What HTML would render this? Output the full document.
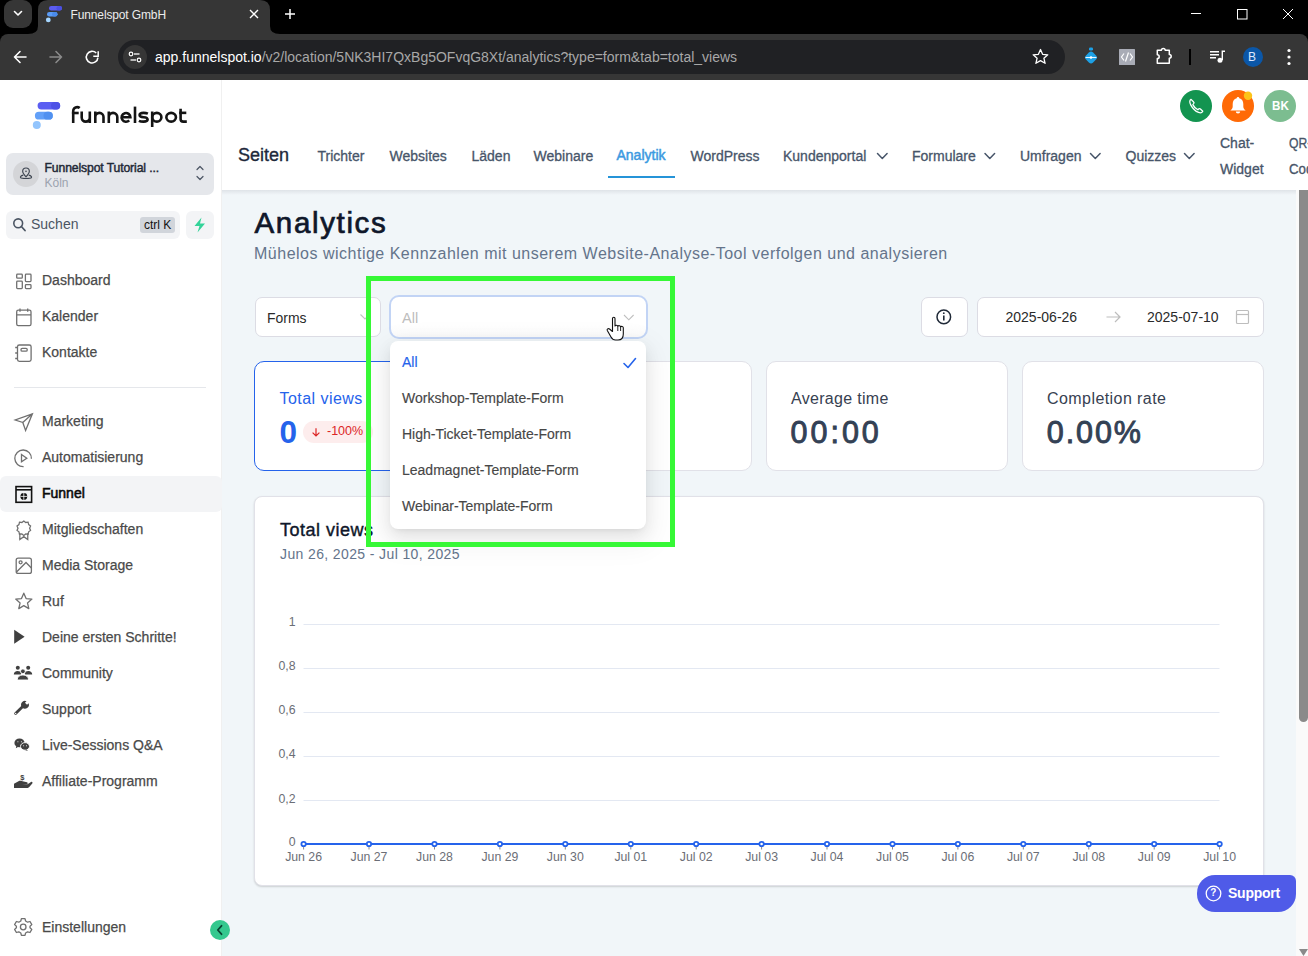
<!DOCTYPE html>
<html><head><meta charset="utf-8">
<style>
*{box-sizing:border-box}
html,body{margin:0;padding:0}
body{width:1308px;height:956px;overflow:hidden;position:relative;font-family:"Liberation Sans",sans-serif;background:#fff}
.a{position:absolute}
.t{position:absolute;white-space:nowrap;line-height:1}
svg{position:absolute;overflow:visible}
</style></head><body>

<!-- ============ BROWSER CHROME ============ -->
<div class="a" style="left:0;top:0;width:1308px;height:44px;background:#000"></div>
<!-- tab search -->
<div class="a" style="left:4px;top:0;width:28px;height:28px;background:#363636;border-radius:9px"></div>
<svg style="left:0;top:0" width="40" height="34"><path d="M14.5 11.5 L18 15 L21.5 11.5" fill="none" stroke="#fff" stroke-width="1.6" stroke-linecap="round" stroke-linejoin="round"/></svg>
<!-- active tab -->
<svg style="left:0;top:0" width="300" height="34">
  <path d="M28 34 Q38 34 38 26 L38 10 Q38 0 48 0 L260 0 Q270 0 270 10 L270 26 Q270 34 280 34 Z" fill="#363636"/>
</svg>
<svg style="left:0;top:0" width="80" height="34">
  <rect x="49" y="6" width="13" height="4.5" rx="2.25" fill="#5b5cf0"/>
  <rect x="56.5" y="6" width="5.5" height="4.5" rx="2.25" fill="#4b50e2"/>
  <rect x="47" y="12" width="10.5" height="4.5" rx="2.25" fill="#5a9bf5"/>
  <rect x="52" y="12" width="5.5" height="4.5" rx="2.25" fill="#4a8aea"/>
  <circle cx="48.3" cy="19.9" r="2.4" fill="#a5d6ff"/>
</svg>
<div class="t" style="left:70.5px;top:9px;font-size:12px;color:#ececec;letter-spacing:-0.13px">Funnelspot GmbH</div>
<svg style="left:0;top:0" width="300" height="34"><path d="M250 10 L258 18 M258 10 L250 18" stroke="#fff" stroke-width="1.4"/></svg>
<svg style="left:0;top:0" width="320" height="34"><path d="M290 9 V19 M285 14 H295" stroke="#fff" stroke-width="1.5"/></svg>
<!-- window controls -->
<svg style="left:0;top:0" width="1308" height="34">
  <path d="M1191 13.5 H1201" stroke="#fff" stroke-width="1"/>
  <rect x="1237.5" y="9.5" width="9.5" height="9.5" fill="none" stroke="#fff" stroke-width="1"/>
  <path d="M1283 9 L1293 19 M1293 9 L1283 19" stroke="#fff" stroke-width="1"/>
</svg>

<!-- toolbar -->
<div class="a" style="left:0;top:34px;width:1308px;height:46px;background:#363636;border-radius:8px 8px 0 0"></div>
<svg style="left:0;top:34px" width="120" height="46">
  <path d="M14.5 23 H26 M14.5 23 L20 17.5 M14.5 23 L20 28.5" fill="none" stroke="#fff" stroke-width="1.6" stroke-linecap="round"/>
  <path d="M61.5 23 H50 M61.5 23 L56 17.5 M61.5 23 L56 28.5" fill="none" stroke="#8a8a8a" stroke-width="1.6" stroke-linecap="round"/>
  <path d="M97.9 23.6 A5.8 5.8 0 1 1 96.2 19" fill="none" stroke="#fff" stroke-width="1.6"/>
  <path d="M93.3 22.2 H98.2 V17.3" fill="none" stroke="#fff" stroke-width="1.5"/>
</svg>
<div class="a" style="left:118px;top:40px;width:947px;height:34px;background:#202124;border-radius:17px"></div>
<div class="a" style="left:123px;top:45px;width:24px;height:24px;background:#363636;border-radius:12px"></div>
<svg style="left:0;top:34px" width="160" height="46">
  <circle cx="131" cy="20" r="1.8" fill="none" stroke="#fff" stroke-width="1.2"/>
  <path d="M134 20 H139.5" stroke="#fff" stroke-width="1.3"/>
  <circle cx="139" cy="26" r="1.8" fill="none" stroke="#fff" stroke-width="1.2"/>
  <path d="M130.5 26 H136" stroke="#fff" stroke-width="1.3"/>
</svg>
<div class="t" style="left:155px;top:50px;font-size:14px;color:#fff">app.funnelspot.io<span style="color:#a8a8a8">/v2/location/5NK3HI7QxBg5OFvqG8Xt/analytics?type=form&amp;tab=total_views</span></div>
<svg style="left:0;top:34px" width="1308" height="46">
  <path d="M1040.5 15.5 L1042.6 20.3 L1047.8 20.8 L1043.9 24.2 L1045.1 29.3 L1040.5 26.6 L1035.9 29.3 L1037.1 24.2 L1033.2 20.8 L1038.4 20.3 Z" fill="none" stroke="#fff" stroke-width="1.3" stroke-linejoin="round"/>
</svg>
<!-- extension icons -->
<svg style="left:0;top:34px" width="1308" height="46">
  <rect x="1086" y="18.5" width="10" height="10" rx="3" fill="#1da1e6" transform="rotate(45 1091 23.5)"/>
  <rect x="1089" y="13.5" width="4" height="3" rx="1.2" fill="#1da1e6"/>
  <path d="M1085.5 23.5 H1096.5" stroke="#e8f6ff" stroke-width="1.1"/>
  <circle cx="1091" cy="23.5" r="1.3" fill="#fff"/>
  <rect x="1119" y="15" width="16" height="16" rx="0.5" fill="#a9acb6"/>
  <path d="M1124 19.5 L1121.5 23 L1124 26.5 M1130 19.5 L1132.5 23 L1130 26.5 M1128.5 18.5 L1125.5 27.5" fill="none" stroke="#fff" stroke-width="1.2"/>
  <path d="M1157.3 16.3 H1161.4 A1.9 1.9 0 0 1 1165.2 16.3 H1169.3 V20.4 A1.9 1.9 0 0 1 1169.3 24.2 V29.3 H1157.3 V24.6 A1.9 1.9 0 0 0 1157.3 20.8 Z" fill="none" stroke="#fff" stroke-width="1.5" stroke-linejoin="round"/>
  <path d="M1190 15 V31" stroke="#000" stroke-width="2"/>
  <path d="M1210 17.7 H1219 M1210 20.8 H1219 M1210 23.8 H1216" stroke="#fff" stroke-width="1.4"/>
  <path d="M1222.3 26 V17.2 H1225" fill="none" stroke="#fff" stroke-width="1.4"/>
  <circle cx="1220" cy="26.2" r="2.5" fill="#fff"/>
  <circle cx="1253" cy="23" r="10" fill="#0b57a8"/>
  <circle cx="1289" cy="16.5" r="1.6" fill="#fff"/>
  <circle cx="1289" cy="23" r="1.6" fill="#fff"/>
  <circle cx="1289" cy="29.5" r="1.6" fill="#fff"/>
</svg>
<div class="t" style="left:1248px;top:51px;font-size:12px;color:#dce8ff">B</div>

<!-- ============ SIDEBAR ============ -->
<div id="sidebar" class="a" style="left:0;top:80px;width:222px;height:876px;background:#fff;border-right:1px solid #f0f0f0"></div>
<!-- logo -->
<svg style="left:0;top:80px" width="222" height="60">
  <rect x="37.6" y="22.1" width="22.6" height="7.4" rx="3.7" fill="#5b5ef2"/>
  <rect x="51" y="22.1" width="9.2" height="7.4" rx="3.7" fill="#4e52e6"/>
  <rect x="34.9" y="31.7" width="17.9" height="7.9" rx="3.95" fill="#62a0f8"/>
  <rect x="43.5" y="31.7" width="9.3" height="7.9" rx="3.95" fill="#5191f0"/>
  <circle cx="36.8" cy="45.1" r="4" fill="#93c5fd"/>
</svg>
<svg style="left:0;top:0" width="222" height="140" fill="none" stroke="#141414" stroke-width="2.6">
  <path d="M73.2 123 V111 A3.9 3.9 0 0 1 77.1 107.1 Q78.6 107.1 79.7 108"/>
  <path d="M71.9 113 H78.7"/>
  <path d="M81.7 111.5 V117.6 A4.05 4.05 0 0 0 89.8 117.6 V111.5 M89.8 117 V123"/>
  <path d="M95.3 111.5 V123 M95.3 117 A4.1 4.1 0 0 1 103.5 117 V123"/>
  <path d="M108.8 111.5 V123 M108.8 117.1 A4.25 4.25 0 0 1 117.3 117.1 V123"/>
  <path d="M121.6 117.3 H130.4 A4.4 4.4 0 1 0 129.2 120.4"/>
  <path d="M135 106.6 V123"/>
  <path d="M147.9 113.6 Q146.2 112.85 143.6 112.85 Q139.6 112.85 139.6 115.05 Q139.6 117 143.6 117.2 Q147.6 117.5 147.6 119.55 Q147.6 121.65 143.5 121.65 Q140.6 121.65 138.9 120.8"/>
  <path d="M152.2 111.5 V127"/>
  <path d="M152.2 117.25 A4.6 4.4 0 1 0 161.4 117.25 A4.6 4.4 0 1 0 152.2 117.25"/>
  <path d="M166.35 117.25 A4.8 4.4 0 1 0 175.95 117.25 A4.8 4.4 0 1 0 166.35 117.25"/>
  <path d="M180.6 108.8 V119 Q180.6 121.65 183.3 121.65 H186.8"/>
  <path d="M179.2 112.85 H186.3"/>
</svg>
<!-- location switcher -->
<div class="a" style="left:6px;top:153px;width:208px;height:41.5px;background:#e5e7eb;border-radius:7px"></div>
<div class="a" style="left:13px;top:161px;width:26px;height:26px;background:#d4d5d8;border-radius:13px"></div>
<svg style="left:0;top:80px" width="222" height="120">
  <g transform="translate(26 93.3) scale(0.9) translate(-26 -94.5)">
  <path d="M26 98.5 C23.5 95.8 22.3 94 22.3 92.3 A3.7 3.7 0 0 1 29.7 92.3 C29.7 94 28.5 95.8 26 98.5 Z" fill="none" stroke="#3f4652" stroke-width="1.3"/>
  <circle cx="26" cy="92.3" r="0.9" fill="#3f4652"/>
  <path d="M23 96.5 C20 97.2 19.5 98.5 20 99.3 C21 100.6 31 100.6 32 99.3 C32.5 98.5 32 97.2 29 96.5" fill="none" stroke="#3f4652" stroke-width="1.3"/>
  </g>
  <path d="M197 89.5 L200 86.5 L203 89.5 M197 96.5 L200 99.5 L203 96.5" fill="none" stroke="#4b5563" stroke-width="1.2" stroke-linecap="round" stroke-linejoin="round"/>
</svg>
<div class="t" style="left:44.5px;top:162px;font-size:12.2px;color:#1f2937;letter-spacing:-0.12px;-webkit-text-stroke:0.45px #1f2937">Funnelspot Tutorial ...</div>
<div class="t" style="left:44.5px;top:177px;font-size:12px;color:#9ca3af">Köln</div>
<!-- search -->
<div class="a" style="left:6px;top:211px;width:174px;height:28px;background:#f3f4f6;border-radius:6px"></div>
<svg style="left:0;top:80px" width="222" height="170">
  <circle cx="18.2" cy="143.3" r="4.4" fill="none" stroke="#4b5563" stroke-width="1.6"/>
  <path d="M21.4 146.5 L25 150.5" stroke="#4b5563" stroke-width="1.8" stroke-linecap="round"/>
</svg>
<div class="t" style="left:31px;top:217px;font-size:14px;color:#4b5563">Suchen</div>
<div class="a" style="left:140px;top:217px;width:35px;height:16px;background:#d1d5db;border-radius:3px"></div>
<div class="t" style="left:144px;top:219px;font-size:12px;color:#111">ctrl K</div>
<div class="a" style="left:186px;top:211px;width:28px;height:28px;background:#f3f4f6;border-radius:6px"></div>
<svg style="left:0;top:80px" width="222" height="170">
  <path d="M201.5 137.5 L194.5 146 H199.5 L197.5 152.5 L205 143.5 H200 Z" fill="#34d399"/>
</svg>

<!-- nav -->
<div class="a" style="left:0;top:476px;width:222px;height:36px;background:#f3f4f6;border-radius:6px"></div>
<div class="a" style="left:14px;top:387px;width:192px;height:1px;background:#e5e7eb"></div>
<div id="navtext" style="color:#4a4a4a;font-size:14px;-webkit-text-stroke:0.25px #4a4a4a">
<div class="t" style="left:42px;top:273px">Dashboard</div>
<div class="t" style="left:42px;top:309px">Kalender</div>
<div class="t" style="left:42px;top:345px">Kontakte</div>
<div class="t" style="left:42px;top:414px">Marketing</div>
<div class="t" style="left:42px;top:450px">Automatisierung</div>
<div class="t" style="left:42px;top:486px;color:#0a0a0a;-webkit-text-stroke:0.55px #0a0a0a">Funnel</div>
<div class="t" style="left:42px;top:522px">Mitgliedschaften</div>
<div class="t" style="left:42px;top:558px">Media Storage</div>
<div class="t" style="left:42px;top:594px">Ruf</div>
<div class="t" style="left:42px;top:630px">Deine ersten Schritte!</div>
<div class="t" style="left:42px;top:666px">Community</div>
<div class="t" style="left:42px;top:702px">Support</div>
<div class="t" style="left:42px;top:738px">Live-Sessions Q&amp;A</div>
<div class="t" style="left:42px;top:774px">Affiliate-Programm</div>
<div class="t" style="left:42px;top:920px">Einstellungen</div>
</div>
<svg style="left:0;top:0" width="222" height="956" fill="none" stroke="#707070" stroke-width="1.3">
  <!-- dashboard -->
  <rect x="16.7" y="274.2" width="5.6" height="4" rx="0.8"/>
  <rect x="16.7" y="281.2" width="5.6" height="7.4" rx="0.8"/>
  <rect x="25.4" y="274.2" width="5.6" height="7.4" rx="0.8"/>
  <rect x="25.4" y="284.6" width="5.6" height="4" rx="0.8"/>
  <!-- calendar -->
  <rect x="16.7" y="310.2" width="14.3" height="15.4" rx="1.6"/>
  <path d="M16.7 314.8 H31 M20 308.5 V311.8 M27.7 308.5 V311.8"/>
  <!-- contacts -->
  <rect x="17.5" y="345" width="13.6" height="16.3" rx="1.8"/>
  <rect x="21" y="348.4" width="6.2" height="2.8" rx="1.2"/>
  <path d="M15.2 347.5 H18 M15.2 353 H18 M15.2 358.5 H18"/>
  <!-- marketing plane -->
  <path d="M32.4 413.8 L15.2 420 L22.8 422.5 L25.6 430.4 Z M22.8 422.5 L32.4 413.8"/>
  <!-- automation -->
  <path d="M31.4 458.8 A8.3 8.3 0 1 0 23.6 466.6"/>
  <path d="M21.5 454.5 L26.8 458.2 L21.5 461.8 Z"/>
  <!-- funnel -->
  <rect x="16" y="486.6" width="15.6" height="15.7" stroke="#111" stroke-width="1.6"/>
  <path d="M16 489.8 H31.6" stroke="#111" stroke-width="1.6"/>
  <circle cx="23.8" cy="496.4" r="3.4" fill="#111" stroke="none"/>
  <path d="M20.4 496.4 H27.2 M23.8 493 V499.8" stroke="#fff" stroke-width="0.8"/>
  <!-- membership ribbon -->
  <g transform="translate(23.8 528.2) scale(0.88) translate(-23.8 -523.7)">
  <path d="M23.8 515.5 L26 517.2 L28.7 516.9 L29.3 519.6 L31.5 521.2 L30.4 523.7 L31.5 526.2 L29.3 527.8 L28.7 530.5 L26 530.2 L23.8 531.9 L21.6 530.2 L18.9 530.5 L18.3 527.8 L16.1 526.2 L17.2 523.7 L16.1 521.2 L18.3 519.6 L18.9 516.9 L21.6 517.2 Z" stroke-width="1.45"/>
  <path d="M19.3 529.5 L19.3 536.5 L23.8 533.3 L28.3 536.5 L28.3 529.5" stroke-width="1.45"/>
  </g>
  <!-- media -->
  <rect x="16.2" y="558.2" width="15.2" height="15.2" rx="2"/>
  <circle cx="20.6" cy="562.3" r="1.5"/>
  <path d="M16.5 572 L26 562.5 L31.4 568"/>
  <!-- star -->
  <path d="M23.8 593.2 L26.1 598.6 L31.9 599.1 L27.5 602.9 L28.8 608.6 L23.8 605.6 L18.8 608.6 L20.1 602.9 L15.7 599.1 L21.5 598.6 Z" stroke-linejoin="round"/>
  <!-- settings gear -->
  <circle cx="23.2" cy="927" r="2.8"/>
  <path d="M21.4 918.6 H25 L25.6 921 L27.6 922.2 L30 921.5 L31.8 924.6 L30 926.3 V927.7 L31.8 929.4 L30 932.5 L27.6 931.8 L25.6 933 L25 935.4 H21.4 L20.8 933 L18.8 931.8 L16.4 932.5 L14.6 929.4 L16.4 927.7 V926.3 L14.6 924.6 L16.4 921.5 L18.8 922.2 L20.8 921 Z" stroke-linejoin="round"/>
</svg>
<svg style="left:0;top:0" width="222" height="956" fill="#404040">
  <!-- play -->
  <path d="M14.2 629.8 L24.6 636.8 L14.2 643.8 Z"/>
  <!-- community people -->
  <circle cx="17.8" cy="667.8" r="2"/>
  <circle cx="28.2" cy="667.8" r="2"/>
  <path d="M13.8 674.6 C13.8 672.3 15.4 671 17.6 671 C19.5 671 20.8 671.8 21.3 673 L20.8 674.6 Z"/>
  <path d="M32.2 674.6 C32.2 672.3 30.6 671 28.4 671 C26.5 671 25.2 671.8 24.7 673 L25.2 674.6 Z"/>
  <circle cx="22.9" cy="671.3" r="2.4" stroke="#fff" stroke-width="0.9"/>
  <path d="M17.2 680 C17.2 676.9 19.5 675 22.9 675 C26.3 675 28.6 676.9 28.6 680 Z" stroke="#fff" stroke-width="0.9"/>
  <!-- wrench -->
  <path d="M15.6 713.6 L23.2 706" stroke="#404040" stroke-width="2.8" stroke-linecap="round"/>
  <path d="M22.24 707.56 A3.9 3.9 0 0 1 26.52 701.21 L24.96 702.77 L27.03 704.84 L28.59 703.28 A3.9 3.9 0 0 1 22.24 707.56 Z"/>
  <circle cx="15.7" cy="713.5" r="0.7" fill="#fff"/>
  <!-- wechat -->
  <ellipse cx="19.5" cy="742.9" rx="5.1" ry="4.4"/>
  <path d="M16.3 746 L15.8 748.2 L18.8 746.6 Z"/>
  <ellipse cx="25" cy="746.4" rx="4.5" ry="3.8" stroke="#fff" stroke-width="0.9"/>
  <path d="M26.8 749.5 L27.8 751 L25 750 Z"/>
  <circle cx="17.9" cy="741.8" r="0.55" fill="#fff"/><circle cx="21.4" cy="741.8" r="0.55" fill="#fff"/>
  <circle cx="23.6" cy="745.8" r="0.5" fill="#fff"/><circle cx="26.5" cy="745.8" r="0.5" fill="#fff"/>
  <!-- affiliate hand -->
  <g transform="translate(0.5 1.7)"><path d="M13.5 782 L18 779.5 C19.5 778.8 20.5 779 22 779.5 L26.5 780.5 C27.5 780.8 27.5 782.2 26.5 782.3 L21.5 782.3 L27 782.5 L30.5 780.3 C31.5 779.7 32.5 780.8 31.8 781.7 L28.5 785.5 C28 786 27.5 786.3 26.5 786.3 L13.5 786.3 Z"/></g>
</svg>
<div class="t" style="left:20.2px;top:773.8px;font-size:7.5px;font-weight:700;color:#404040">$</div>


<!-- ============ HEADER ============ -->
<div id="header" class="a" style="left:222px;top:80px;width:1086px;height:110px;background:#fff"></div>
<div class="t" style="left:238px;top:145.8px;font-size:18px;color:#1e293b;-webkit-text-stroke:0.35px">Seiten</div>
<div style="color:#475569;font-size:14px;-webkit-text-stroke:0.3px">
<div class="t" style="left:317.5px;top:149px">Trichter</div>
<div class="t" style="left:389.5px;top:149px">Websites</div>
<div class="t" style="left:471.5px;top:149px">Läden</div>
<div class="t" style="left:533.5px;top:149px">Webinare</div>
<div class="t" style="left:616.5px;top:148px;color:#3b9ae1;-webkit-text-stroke:0.5px #3b9ae1">Analytik</div>
<div class="t" style="left:690.5px;top:149px">WordPress</div>
<div class="t" style="left:783px;top:149px">Kundenportal</div>
<div class="t" style="left:912px;top:149px">Formulare</div>
<div class="t" style="left:1020px;top:149px">Umfragen</div>
<div class="t" style="left:1125.5px;top:149px">Quizzes</div>
<div class="t" style="left:1220px;top:136.2px">Chat-</div>
<div class="t" style="left:1220px;top:161.6px">Widget</div>
<div class="t" style="left:1288.5px;top:136.2px;transform:scaleX(0.87);transform-origin:left">QR-</div>
<div class="t" style="left:1288.5px;top:161.6px;transform:scaleX(0.95);transform-origin:left">Codes</div>
</div>
<div class="a" style="left:608px;top:176px;width:67px;height:2px;background:#2594d8"></div>
<svg style="left:0;top:0" width="1308" height="200" fill="none" stroke="#475569" stroke-width="1.5" stroke-linecap="round" stroke-linejoin="round">
  <path d="M877.5 153.5 L882.3 158.5 L887.1 153.5"/>
  <path d="M985 153.5 L989.8 158.5 L994.6 153.5"/>
  <path d="M1090.5 153.5 L1095.3 158.5 L1100.1 153.5"/>
  <path d="M1184.5 153.5 L1189.3 158.5 L1194.1 153.5"/>
</svg>
<!-- top right circles -->
<div class="a" style="left:1179.6px;top:90px;width:32px;height:32px;border-radius:16px;background:#139450"></div>
<div class="a" style="left:1222px;top:90px;width:32px;height:32px;border-radius:16px;background:#ff6a06"></div>
<div class="a" style="left:1264px;top:90px;width:32px;height:32px;border-radius:16px;background:#7cbd90"></div>
<svg style="left:0;top:0" width="1308" height="200">
  <g transform="translate(1196.1 106) scale(1.17) translate(-1195.6 -106)"><path d="M1191.3 100.3 C1190 101 1189.8 102.8 1191 105 C1192.5 107.8 1195 110.4 1197.7 111.5 C1199.5 112.2 1200.8 111.5 1201.3 110.5 L1199.3 108.5 C1198.8 108 1198.2 108.1 1197.7 108.6 L1197.1 109.2 C1195.2 108.2 1193.7 106.6 1192.8 104.8 L1193.4 104.2 C1193.9 103.7 1194 103.1 1193.5 102.6 Z" fill="none" stroke="#fff" stroke-width="1.1" stroke-linejoin="round"/></g>
  <path d="M1238 97 C1238.8 97 1239.3 97.6 1239.3 98.3 C1241.9 98.9 1243.3 101.2 1243.3 104 V106.6 C1243.3 108.3 1244.3 109.5 1245.7 110.6 H1230.3 C1231.7 109.5 1232.7 108.3 1232.7 106.6 V104 C1232.7 101.2 1234.1 98.9 1236.7 98.3 C1236.7 97.6 1237.2 97 1238 97 Z" fill="#fff"/>
  <path d="M1235.8 111.6 H1240.2 A2.2 2 0 0 1 1235.8 111.6 Z" fill="#fff"/>
  <circle cx="1248" cy="95.8" r="4.2" fill="#fcc419"/>
</svg>
<div class="t" style="left:1271.5px;top:98.6px;font-size:13.5px;font-weight:700;color:#fff;transform:scaleX(0.86);transform-origin:left">BK</div>

<!-- ============ CONTENT ============ -->
<div id="content" class="a" style="left:222px;top:190px;width:1074px;height:766px;background:#f1f6f9;overflow:hidden"></div>
<div class="a" style="left:222px;top:190px;width:1074px;height:5px;background:linear-gradient(#dfe3e8,rgba(241,245,249,0))"></div>
<div class="t" style="left:254.5px;top:207.5px;font-size:29.5px;color:#0f172a;letter-spacing:1.65px;-webkit-text-stroke:0.7px #0f172a">Analytics</div>
<div class="t" style="left:254px;top:245.5px;font-size:16px;color:#64748b;letter-spacing:0.5px">Mühelos wichtige Kennzahlen mit unserem Website-Analyse-Tool verfolgen und analysieren</div>

<!-- filter row -->
<div class="a" style="left:254.5px;top:297px;width:126.5px;height:40px;background:#fff;border:1px solid #dcdce4;border-radius:7px"></div>
<div class="t" style="left:266.8px;top:310.2px;font-size:15px;color:#2a2a2a;transform:scaleX(0.93);transform-origin:left">Forms</div>
<svg style="left:0;top:0" width="1308" height="400" fill="none" stroke="#c4c4c4" stroke-width="1.1">
  <path d="M360.5 314.5 L365 319 L369.5 314.5"/>
</svg>
<div class="a" style="left:388.5px;top:295px;width:259.5px;height:43.5px;background:linear-gradient(#fff 70%,#fafafa);border:2.6px solid #c2d4f5;border-radius:10px"></div>
<div class="t" style="left:402px;top:311px;font-size:14.5px;color:#bdbdbd">All</div>
<svg style="left:0;top:0" width="1308" height="400" fill="none" stroke="#bfbfbf" stroke-width="1.1">
  <path d="M624 315 L628.8 319.8 L633.6 315"/>
</svg>
<div class="a" style="left:920.5px;top:297px;width:47px;height:40px;background:#fff;border:1px solid #dcdce4;border-radius:7px"></div>
<svg style="left:0;top:0" width="1308" height="400">
  <circle cx="943.8" cy="316.9" r="6.8" fill="none" stroke="#1f2937" stroke-width="1.5"/>
  <path d="M943.8 315.5 V320.5" stroke="#1f2937" stroke-width="1.6"/>
  <circle cx="943.8" cy="313.2" r="0.9" fill="#1f2937"/>
</svg>
<div class="a" style="left:976.5px;top:297px;width:287.5px;height:40px;background:#fff;border:1px solid #dcdce4;border-radius:7px"></div>
<div class="t" style="left:1005.5px;top:309.5px;font-size:14px;color:#2a2a2a">2025-06-26</div>
<div class="t" style="left:1147px;top:309.5px;font-size:14px;color:#2a2a2a">2025-07-10</div>
<svg style="left:0;top:0" width="1308" height="400" fill="none" stroke="#bdbdbd" stroke-width="1.2">
  <path d="M1106.5 317 H1120 M1115 312 L1120 317 L1115 322"/>
  <rect x="1236.5" y="310.5" width="12" height="13" rx="1"/>
  <path d="M1236.5 314.5 H1248.5"/>
</svg>

<!-- stat cards -->
<div class="a" style="left:254px;top:361px;width:241.5px;height:110px;background:#fff;border:1px solid #2563eb;border-radius:10px"></div>
<div class="a" style="left:510px;top:361px;width:241.5px;height:110px;background:#fff;border:1px solid #e1e1e8;border-radius:10px"></div>
<div class="a" style="left:766px;top:361px;width:241.5px;height:110px;background:#fff;border:1px solid #e1e1e8;border-radius:10px"></div>
<div class="a" style="left:1022px;top:361px;width:241.5px;height:110px;background:#fff;border:1px solid #e1e1e8;border-radius:10px"></div>
<div class="t" style="left:279.5px;top:391px;font-size:16px;color:#2563eb;letter-spacing:0.45px">Total views</div>
<div class="t" style="left:279.5px;top:416.5px;font-size:31.5px;font-weight:700;color:#2563eb">0</div>
<div class="a" style="left:303px;top:421px;width:70px;height:22px;background:#fdeded;border-radius:11px"></div>
<svg style="left:0;top:0" width="1308" height="500" fill="none" stroke="#dc2626" stroke-width="1.2">
  <path d="M316 428.2 V436 M312.6 432.6 L316 436 L319.4 432.6"/>
</svg>
<div class="t" style="left:327px;top:425.4px;font-size:12.5px;color:#dc2626">-100%</div>
<div class="t" style="left:791px;top:391px;font-size:16px;color:#374151;letter-spacing:0.3px">Average time</div>
<div class="t" style="left:790.5px;top:417.4px;font-size:30.5px;color:#334155;-webkit-text-stroke:0.9px #334155;letter-spacing:3px">00:00</div>
<div class="t" style="left:1047px;top:391px;font-size:16px;color:#374151;letter-spacing:0.43px">Completion rate</div>
<div class="t" style="left:1046.8px;top:417.4px;font-size:30.5px;color:#334155;-webkit-text-stroke:0.9px #334155;letter-spacing:1.9px">0.00%</div>

<!-- chart card -->
<div class="a" style="left:254px;top:496px;width:1009.5px;height:390px;background:#fff;border:1px solid #e1e1e8;border-radius:8px;box-shadow:0 1px 2px rgba(0,0,0,0.16)"></div>
<div class="t" style="left:280px;top:520.7px;font-size:18px;color:#0f172a;letter-spacing:0.5px;-webkit-text-stroke:0.4px #0f172a">Total views</div>
<div class="t" style="left:280px;top:546.5px;font-size:14px;color:#64748b;letter-spacing:0.38px">Jun 26, 2025 - Jul 10, 2025</div>
<svg id="chart" style="left:0;top:0" width="1308" height="956"><path d="M303.5 624.5 H1219.5" stroke="#e3e8f2" stroke-width="1"/><path d="M303.5 668.5 H1219.5" stroke="#e3e8f2" stroke-width="1"/><path d="M303.5 712.5 H1219.5" stroke="#e3e8f2" stroke-width="1"/><path d="M303.5 756.5 H1219.5" stroke="#e3e8f2" stroke-width="1"/><path d="M303.5 800.5 H1219.5" stroke="#e3e8f2" stroke-width="1"/><path d="M303.6 844 V849.5" stroke="#8c8c8c" stroke-width="1"/><path d="M369.0 844 V849.5" stroke="#8c8c8c" stroke-width="1"/><path d="M434.5 844 V849.5" stroke="#8c8c8c" stroke-width="1"/><path d="M499.9 844 V849.5" stroke="#8c8c8c" stroke-width="1"/><path d="M565.3 844 V849.5" stroke="#8c8c8c" stroke-width="1"/><path d="M630.8 844 V849.5" stroke="#8c8c8c" stroke-width="1"/><path d="M696.2 844 V849.5" stroke="#8c8c8c" stroke-width="1"/><path d="M761.6 844 V849.5" stroke="#8c8c8c" stroke-width="1"/><path d="M827.0 844 V849.5" stroke="#8c8c8c" stroke-width="1"/><path d="M892.5 844 V849.5" stroke="#8c8c8c" stroke-width="1"/><path d="M957.9 844 V849.5" stroke="#8c8c8c" stroke-width="1"/><path d="M1023.3 844 V849.5" stroke="#8c8c8c" stroke-width="1"/><path d="M1088.8 844 V849.5" stroke="#8c8c8c" stroke-width="1"/><path d="M1154.2 844 V849.5" stroke="#8c8c8c" stroke-width="1"/><path d="M1219.6 844 V849.5" stroke="#8c8c8c" stroke-width="1"/><path d="M303.6 844 H1219.6" stroke="#2563eb" stroke-width="2"/><circle cx="303.6" cy="844" r="2.2" fill="#fff" stroke="#2563eb" stroke-width="1.8"/><circle cx="369.0" cy="844" r="2.2" fill="#fff" stroke="#2563eb" stroke-width="1.8"/><circle cx="434.5" cy="844" r="2.2" fill="#fff" stroke="#2563eb" stroke-width="1.8"/><circle cx="499.9" cy="844" r="2.2" fill="#fff" stroke="#2563eb" stroke-width="1.8"/><circle cx="565.3" cy="844" r="2.2" fill="#fff" stroke="#2563eb" stroke-width="1.8"/><circle cx="630.8" cy="844" r="2.2" fill="#fff" stroke="#2563eb" stroke-width="1.8"/><circle cx="696.2" cy="844" r="2.2" fill="#fff" stroke="#2563eb" stroke-width="1.8"/><circle cx="761.6" cy="844" r="2.2" fill="#fff" stroke="#2563eb" stroke-width="1.8"/><circle cx="827.0" cy="844" r="2.2" fill="#fff" stroke="#2563eb" stroke-width="1.8"/><circle cx="892.5" cy="844" r="2.2" fill="#fff" stroke="#2563eb" stroke-width="1.8"/><circle cx="957.9" cy="844" r="2.2" fill="#fff" stroke="#2563eb" stroke-width="1.8"/><circle cx="1023.3" cy="844" r="2.2" fill="#fff" stroke="#2563eb" stroke-width="1.8"/><circle cx="1088.8" cy="844" r="2.2" fill="#fff" stroke="#2563eb" stroke-width="1.8"/><circle cx="1154.2" cy="844" r="2.2" fill="#fff" stroke="#2563eb" stroke-width="1.8"/><circle cx="1219.6" cy="844" r="2.2" fill="#fff" stroke="#2563eb" stroke-width="1.8"/></svg>
<div id="chartlabels" style="font-size:12.3px;color:#6b6e76"><div class="t" style="right:1012.5px;top:615.9px;text-align:right">1</div><div class="t" style="right:1012.5px;top:660.0px;text-align:right">0,8</div><div class="t" style="right:1012.5px;top:704.0px;text-align:right">0,6</div><div class="t" style="right:1012.5px;top:748.0px;text-align:right">0,4</div><div class="t" style="right:1012.5px;top:792.5px;text-align:right">0,2</div><div class="t" style="right:1012.5px;top:836.2px;text-align:right">0</div><div class="t" style="left:253.6px;width:100px;top:850.5px;text-align:center">Jun 26</div><div class="t" style="left:319.0px;width:100px;top:850.5px;text-align:center">Jun 27</div><div class="t" style="left:384.5px;width:100px;top:850.5px;text-align:center">Jun 28</div><div class="t" style="left:449.9px;width:100px;top:850.5px;text-align:center">Jun 29</div><div class="t" style="left:515.3px;width:100px;top:850.5px;text-align:center">Jun 30</div><div class="t" style="left:580.8px;width:100px;top:850.5px;text-align:center">Jul 01</div><div class="t" style="left:646.2px;width:100px;top:850.5px;text-align:center">Jul 02</div><div class="t" style="left:711.6px;width:100px;top:850.5px;text-align:center">Jul 03</div><div class="t" style="left:777.0px;width:100px;top:850.5px;text-align:center">Jul 04</div><div class="t" style="left:842.5px;width:100px;top:850.5px;text-align:center">Jul 05</div><div class="t" style="left:907.9px;width:100px;top:850.5px;text-align:center">Jul 06</div><div class="t" style="left:973.3px;width:100px;top:850.5px;text-align:center">Jul 07</div><div class="t" style="left:1038.8px;width:100px;top:850.5px;text-align:center">Jul 08</div><div class="t" style="left:1104.2px;width:100px;top:850.5px;text-align:center">Jul 09</div><div class="t" style="left:1169.6px;width:100px;top:850.5px;text-align:center">Jul 10</div></div>

<!-- dropdown panel -->
<div class="a" style="left:390px;top:341px;width:256px;height:188px;background:#fff;border-radius:8px;box-shadow:0 6px 16px rgba(0,0,0,0.08),0 3px 6px -4px rgba(0,0,0,0.12),0 9px 28px 8px rgba(0,0,0,0.05)"></div>
<div style="font-size:14px;color:#474747;-webkit-text-stroke:0.15px">
<div class="t" style="left:402px;top:354.5px;color:#2563eb">All</div>
<div class="t" style="left:402px;top:390.5px">Workshop-Template-Form</div>
<div class="t" style="left:402px;top:426.5px">High-Ticket-Template-Form</div>
<div class="t" style="left:402px;top:462.5px">Leadmagnet-Template-Form</div>
<div class="t" style="left:402px;top:498.5px">Webinar-Template-Form</div>
</div>
<svg style="left:0;top:0" width="1308" height="600" fill="none" stroke="#2563eb" stroke-width="1.6" stroke-linecap="round" stroke-linejoin="round">
  <path d="M624 363.5 L628 367.5 L635.5 358.5"/>
</svg>
<!-- cursor -->
<svg style="left:0;top:0" width="1308" height="600">
  <path d="M612.5 318.5 C612.5 316.8 615 316.8 615 318.5 V326 C615.5 325 617.5 325 617.8 326.3 C618.5 325.3 620.5 325.5 620.6 326.8 C621.3 326 623.3 326.3 623.3 327.8 V334 C623.3 337.5 621.5 340 618 340 H615.5 C613.5 340 612 338.8 611 337 L607.3 330.5 C606.6 329.2 608.2 328 609.5 329 L612.5 331.5 Z" fill="#fff" stroke="#111" stroke-width="1.1" stroke-linejoin="round"/>
  <path d="M617.8 326.3 V331 M620.6 326.8 V331" stroke="#111" stroke-width="0.9"/>
</svg>
<!-- green box -->
<div class="a" style="left:366px;top:276px;width:309px;height:271px;border:5px solid #36f836"></div>

<!-- support button -->
<div class="a" style="left:1197px;top:875px;width:99px;height:37px;background:#4f5be8;border-radius:18px 6px 18px 18px"></div>
<svg style="left:0;top:0" width="1308" height="956">
  <circle cx="1213.5" cy="893.5" r="7.3" fill="none" stroke="#fff" stroke-width="1.3"/>
</svg>
<div class="t" style="left:1210.3px;top:888px;font-size:10px;font-weight:700;color:#fff">?</div>
<div class="t" style="left:1228px;top:885.5px;font-size:14px;font-weight:700;color:#fff;letter-spacing:-0.25px">Support</div>

<!-- scrollbar -->
<div class="a" style="left:1296px;top:190px;width:12px;height:766px;background:#fafafa"></div>
<div class="a" style="left:1299px;top:190px;width:9px;height:532px;background:#8a8a8a;border-radius:0 0 4.5px 4.5px"></div>
<svg style="left:0;top:0" width="1308" height="956"><path d="M1299 949 H1308 L1303.5 956 Z" fill="#8a8a8a"/></svg>

<!-- collapse button -->
<div class="a" style="left:210px;top:920px;width:20px;height:20px;border-radius:10px;background:#34c88e"></div>
<svg style="left:0;top:0" width="240" height="956"><path d="M221.5 925.8 L217.8 930 L221.5 934.2" fill="none" stroke="#0b4634" stroke-width="1.8" stroke-linecap="round" stroke-linejoin="round"/></svg>
</body></html>
